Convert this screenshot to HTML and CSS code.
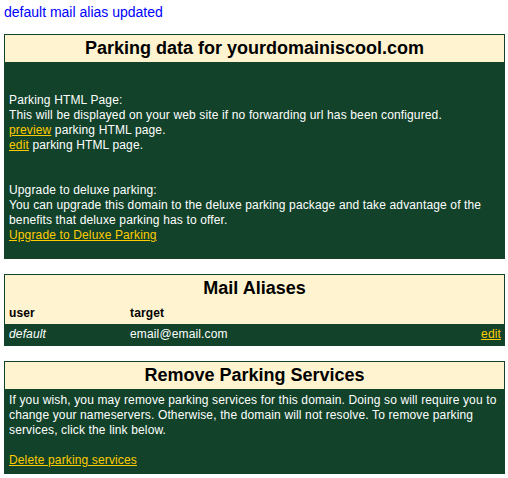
FILE: index.html
```html
<!DOCTYPE html>
<html lang="en">
<head>
  <meta charset="UTF-8">
  <title>Parking data</title>
  <link rel="stylesheet" href="styles.css">
</head>
<body>
  <div class="notice">default mail alias updated</div>

  <div class="panel">
    <div class="panel-head">Parking data for yourdomainiscool.com</div>
    <div class="panel-body parking">
      <p class="first">
        Parking HTML Page:<br>
        This will be displayed on your web site if no forwarding url has been configured.<br>
        <a href="#">preview</a> parking HTML page.<br>
        <a href="#">edit</a> parking HTML page.
      </p>
      <p class="second">
        Upgrade to deluxe parking:<br>
        You can upgrade this domain to the deluxe parking package and take advantage of the benefits that deluxe parking has to offer.<br>
        <a href="#">Upgrade to Deluxe Parking</a>
      </p>
    </div>
  </div>

  <div class="panel">
    <div class="panel-head">Mail Aliases</div>
    <table class="aliases">
      <tr>
        <th class="col-user">user</th>
        <th>target</th>
        <th></th>
      </tr>
      <tr>
        <td class="col-user"><i>default</i></td>
        <td>email@email.com</td>
        <td class="col-edit"><a href="#">edit</a></td>
      </tr>
    </table>
  </div>

  <div class="panel">
    <div class="panel-head">Remove Parking Services</div>
    <div class="panel-body">
      If you wish, you may remove parking services for this domain. Doing so will require you to change your nameservers. Otherwise, the domain will not resolve. To remove parking services, click the link below.<br>
      <br>
      <a href="#">Delete parking services</a>
    </div>
  </div>
</body>
</html>
```

FILE: styles.css
```css
body { margin: 4px 3px 4px 4px; font-family: "Liberation Sans", Arial, sans-serif; background: #fff; }
a { color: #ffcc00; text-decoration: underline; }

.notice { color: #0000ff; font-size: 14px; line-height: 16px; margin-bottom: 14px; }

.panel { border: 1px solid #12432a; margin-bottom: 15px; }
.panel-head { background: #fff4cf; color: #000; text-align: center; font-size: 18px; font-weight: bold; line-height: 21px; padding: 3px 0; }
.panel-body { background: #12432a; color: #fff; font-size: 12px; line-height: 15px; letter-spacing: 0.14px; padding: 4px 4px 5px 4px; }
.panel-body p { margin: 0; }
.parking .first { margin-top: 27px; }
.parking .second { margin-top: 30px; margin-bottom: 10px; }

.aliases { width: 100%; border-collapse: collapse; font-size: 12px; line-height: 15px; letter-spacing: 0.14px; }
.aliases th { background: #fff4cf; color: #000; text-align: left; padding: 4px 4px 3px; }
.aliases td { background: #12432a; color: #fff; padding: 3px 4px; }
.aliases .col-user { width: 113px; }
.aliases .col-edit { text-align: right; padding-right: 3px; }
```
